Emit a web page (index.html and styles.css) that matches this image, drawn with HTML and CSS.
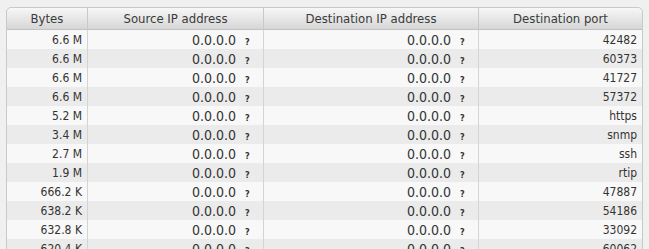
FILE: index.html
```html
<!DOCTYPE html>
<html lang="en">
<head>
    <meta charset="UTF-8">
    <title>Top flows</title>
    <link rel="stylesheet" href="styles.css">
</head>
<body>
    <table class="flows">
        <thead>
            <tr>
                <th class="col-bytes">Bytes</th>
                <th class="col-ip">Source IP address</th>
                <th class="col-ip2">Destination IP address</th>
                <th>Destination port</th>
            </tr>
        </thead>
        <tbody>
            <tr><td>6.6 M</td><td class="ip">0.0.0.0<span class="flag">?</span></td><td class="ip">0.0.0.0<span class="flag">?</span></td><td>42482</td></tr>
            <tr><td>6.6 M</td><td class="ip">0.0.0.0<span class="flag">?</span></td><td class="ip">0.0.0.0<span class="flag">?</span></td><td>60373</td></tr>
            <tr><td>6.6 M</td><td class="ip">0.0.0.0<span class="flag">?</span></td><td class="ip">0.0.0.0<span class="flag">?</span></td><td>41727</td></tr>
            <tr><td>6.6 M</td><td class="ip">0.0.0.0<span class="flag">?</span></td><td class="ip">0.0.0.0<span class="flag">?</span></td><td>57372</td></tr>
            <tr><td>5.2 M</td><td class="ip">0.0.0.0<span class="flag">?</span></td><td class="ip">0.0.0.0<span class="flag">?</span></td><td>https</td></tr>
            <tr><td>3.4 M</td><td class="ip">0.0.0.0<span class="flag">?</span></td><td class="ip">0.0.0.0<span class="flag">?</span></td><td>snmp</td></tr>
            <tr><td>2.7 M</td><td class="ip">0.0.0.0<span class="flag">?</span></td><td class="ip">0.0.0.0<span class="flag">?</span></td><td>ssh</td></tr>
            <tr><td>1.9 M</td><td class="ip">0.0.0.0<span class="flag">?</span></td><td class="ip">0.0.0.0<span class="flag">?</span></td><td>rtip</td></tr>
            <tr><td>666.2 K</td><td class="ip">0.0.0.0<span class="flag">?</span></td><td class="ip">0.0.0.0<span class="flag">?</span></td><td>47887</td></tr>
            <tr><td>638.2 K</td><td class="ip">0.0.0.0<span class="flag">?</span></td><td class="ip">0.0.0.0<span class="flag">?</span></td><td>54186</td></tr>
            <tr><td>632.8 K</td><td class="ip">0.0.0.0<span class="flag">?</span></td><td class="ip">0.0.0.0<span class="flag">?</span></td><td>33092</td></tr>
            <tr><td>620.4 K</td><td class="ip">0.0.0.0<span class="flag">?</span></td><td class="ip">0.0.0.0<span class="flag">?</span></td><td>60062</td></tr>
        </tbody>
    </table>
</body>
</html>
```

FILE: styles.css
```css
body {
    margin: 0;
    padding: 7px 0 0 6px;
    background: #f0f0f0;
    font-family: "DejaVu Sans Condensed", "DejaVu Sans", sans-serif;
    font-stretch: condensed;
    color: #333;
    overflow: hidden;
}

/* Flow table */
.flows {
    border-spacing: 0;
    border: 1px solid #c9c9c9;
    border-radius: 5px 5px 0 0;
    width: 637px;
    table-layout: fixed;
}

.flows th {
    height: 21px;
    padding: 0;
    font-weight: normal;
    font-size: 13px;
    color: #3a3a3a;
    background: linear-gradient(#f7f7f7, #d6d6d6);
    border-left: 1px solid #c9c9c9;
    border-bottom: 1px solid #c2c2c2;
    text-align: center;
}

.flows th:first-child {
    border-left: none;
    border-top-left-radius: 5px;
}

.flows th:last-child {
    border-top-right-radius: 5px;
}

.col-bytes { width: 80px; }
.col-ip { width: 175px; }
.col-ip2 { width: 214px; }

.flows td {
    height: 19px;
    padding: 0 5px 0 0;
    font-size: 12px;
    text-align: right;
    border-left: 1px solid #d4d4d4;
    white-space: nowrap;
}

.flows td:first-child {
    border-left: none;
}

.flows tbody tr:nth-child(odd) { background: #f8f8f8; }
.flows tbody tr:nth-child(even) { background: #ebebeb; }

/* IP address with country flag placeholder */
.flows td.ip {
    font-size: 14px;
    padding-right: 0;
}

.flag {
    display: inline-block;
    width: 27px;
    padding-left: 9px;
    box-sizing: border-box;
    text-align: left;
    font-size: 9px;
    font-weight: bold;
}
```
